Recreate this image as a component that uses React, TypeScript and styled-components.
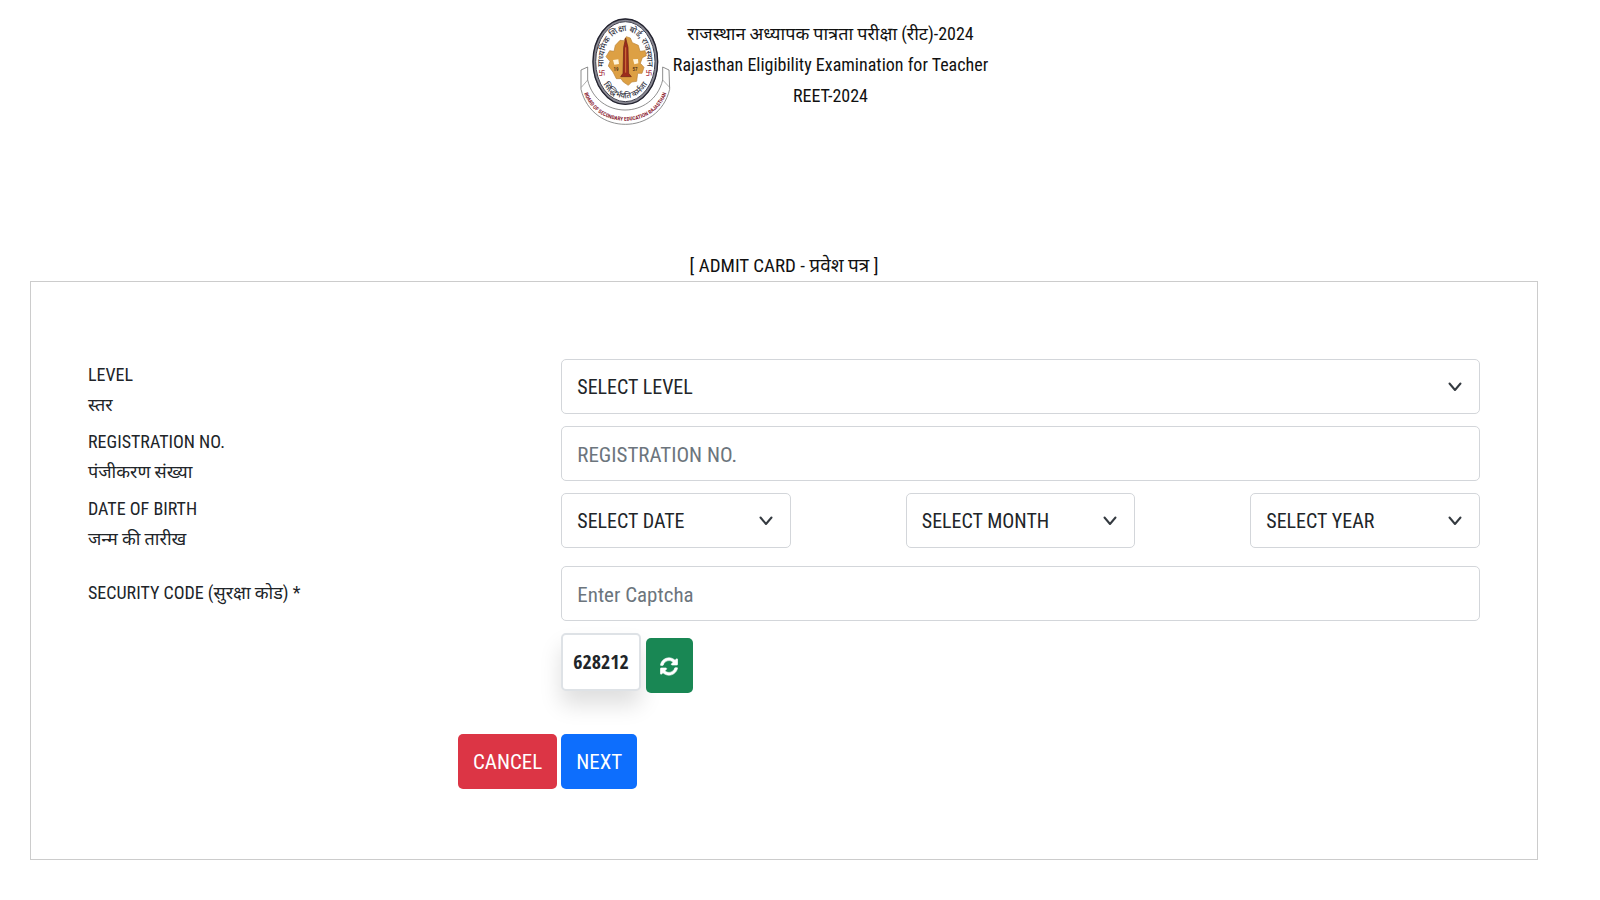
import React, { useState } from 'react';
import styled, { createGlobalStyle, css } from 'styled-components';
import { FaSyncAlt } from 'react-icons/fa';

const GlobalStyle = createGlobalStyle`
  *, *::before, *::after { box-sizing: border-box; }
  body {
    margin: 0;
    background: #fff;
    color: #212529;
    font-family: 'Roboto Condensed', 'Open Sans', 'Noto Sans', sans-serif;
    font-size: 18px;
    line-height: 31px;
  }
`;

const Page = styled.main`
  padding: 18px 62px 40px 30px;
`;

const Header = styled.header`
  display: flex;
  justify-content: center;
  align-items: flex-start;
  gap: 2px;
  margin-bottom: 126px;
  color: #111;
  text-align: center;
`;

const HeaderText = styled.div`
  display: flex;
  flex-direction: column;
`;

const ExamName = styled.h1`
  margin: 0;
  font-size: 18px;
  font-weight: 400;
`;

const HeaderLine = styled.p`
  margin: 0;
`;

const FormTitle = styled.h2`
  margin: 0;
  color: #111;
  font-size: 19px;
  font-weight: 400;
  line-height: 30px;
  text-align: center;
`;

const Panel = styled.form`
  padding: 77px 57px 70px;
  border: 1px solid #ccc;
`;

const Row = styled.div<{ $space?: number }>`
  display: grid;
  grid-template-columns: 34% 66%;
  align-items: start;
  padding-bottom: ${p => p.$space ?? 6}px;
`;

const Label = styled.label<{ $single?: boolean }>`
  display: flex;
  flex-direction: column;
  padding-top: ${p => (p.$single ? 12 : 1)}px;
  line-height: 30px;
`;

const control = css`
  width: 100%;
  height: 55px;
  padding: 2px 15px 0;
  border: 1px solid #d3d6da;
  border-radius: 5px;
  background: #fff;
  color: #212529;
  font: inherit;
`;

const TextInput = styled.input`
  ${control}
  font-size: 21px;
  &::placeholder { color: #6c757d; opacity: 1; }
`;

const SelectBox = styled.div`
  position: relative;
  width: 100%;
`;

const Select = styled.select`
  ${control}
  font-size: 20px;
  appearance: none;
`;

const Chevron = styled.svg`
  position: absolute;
  top: 23px;
  right: 18px;
  width: 14px;
  height: 10px;
  pointer-events: none;
`;

const DateGroup = styled.div`
  display: grid;
  grid-template-columns: repeat(3, 25%);
  justify-content: space-between;
`;

const CaptchaField = styled.div`
  display: flex;
  flex-direction: column;
  gap: 12px;
`;

const CaptchaLine = styled.div`
  display: flex;
  align-items: flex-start;
  gap: 5px;
`;

const CaptchaCode = styled.output`
  padding: 12px 10px;
  border: 2px solid #dee2e6;
  border-radius: 5px;
  background: #fff;
  box-shadow: 0 14px 22px rgba(0, 0, 0, 0.13);
  font-family: 'Open Sans Condensed', 'Roboto Condensed', sans-serif;
  font-size: 20px;
  font-weight: 700;
  line-height: 30px;
`;

const Button = styled.button<{ $color: string }>`
  height: 55px;
  padding: 2px 15px 0;
  border: 0;
  border-radius: 5px;
  background: ${p => p.$color};
  color: #fff;
  font: inherit;
  font-size: 21px;
`;

const RefreshButton = styled(Button)`
  display: grid;
  place-items: center;
  width: 47px;
  margin-top: 5px;
  padding: 2px 0 0;
`;

const RefreshIcon = styled(FaSyncAlt)`
  width: 18px;
  height: 21px;
  stroke: #fff;
  stroke-width: 16px;
`;

const Actions = styled(Row)`
  padding: 41px 0 0;
`;

const ActionCell = styled.div<{ $end?: boolean }>`
  display: flex;
  justify-content: ${p => (p.$end ? 'flex-end' : 'flex-start')};
  padding-right: 4px;
`;

const EmblemArt = styled.svg`
  flex: none;
  width: 91px;
  height: 107px;
`;

function Emblem() {
  return (
    <EmblemArt viewBox="27 24 273 321" role="img" aria-label="Board of Secondary Education Rajasthan">
      <defs>
        <path id="ringTop" d="M98 176 C88 26 238 26 228 176" />
        <path id="ringBottom" d="M89 200 C110 286 216 286 237 200" />
        <path id="ribbonLine" d="M38 243 C70 362 256 362 288 243" />
      </defs>
      <path d="M30 180 L50 171 L50 210 C78 330 246 330 275 210 L275 171 L294 180 L296 238 C262 378 64 378 30 238 Z" fill="#fff" stroke="#777" strokeWidth="2.5" />
      <path d="M31 232 L50 210 M296 232 L275 210" stroke="#888" strokeWidth="2" />
      <ellipse cx="163" cy="155" rx="94" ry="125" fill="#fff" stroke="#8a8a94" strokeWidth="9" />
      <ellipse cx="163" cy="155" rx="97" ry="128" fill="none" stroke="#23232f" strokeWidth="4" />
      <ellipse cx="163" cy="155" rx="89" ry="120" fill="none" stroke="#3d3d4a" strokeWidth="3" />
      <path d="M105 140 L116 122 L129 124 L133 106 L147 91 L158 92 L166 80 L178 84 L184 98 L202 106 L207 124 L222 122 L226 137 L214 143 L208 160 L219 172 L213 190 L200 190 L197 214 L182 216 L172 226 L157 216 L150 206 L136 206 L126 186 L112 168 L117 154 Z" fill="#dda044" stroke="#b98236" strokeWidth="2" />
      <path d="M126 150 L142 148 L144 162 L130 164 Z M186 148 L201 147 L202 160 L190 163 Z" fill="#fff3d8" />
      <path d="M156 190 L158 112 L164 84 L171 112 L173 190 L181 200 L149 200 Z" fill="#9c2c1c" stroke="#6d2417" strokeWidth="2" />
      <path d="M164 112 V188" stroke="#d27838" strokeWidth="3" />
      <text fill="#363644" fontSize="25" fontWeight="500">
        <textPath href="#ringTop" startOffset="50%" textAnchor="middle">माध्यमिक शिक्षा बोर्ड, राजस्थान</textPath>
      </text>
      <text fill="#363644" fontSize="24" fontWeight="500">
        <textPath href="#ringBottom" startOffset="50%" textAnchor="middle">सिद्धिर्भवति कर्मजा</textPath>
      </text>
      <text x="94" y="194" fill="#a52a3a" fontSize="18" fontWeight="700" textAnchor="middle">卐</text>
      <text x="235" y="194" fill="#a52a3a" fontSize="18" fontWeight="700" textAnchor="middle">卐</text>
      <text x="135" y="184" fill="#5b3a1c" fontSize="15" fontWeight="700" textAnchor="middle">19</text>
      <text x="192" y="184" fill="#5b3a1c" fontSize="15" fontWeight="700" textAnchor="middle">57</text>
      <text fill="#8b2432" fontSize="16" fontWeight="700">
        <textPath href="#ribbonLine" startOffset="50%" textAnchor="middle">BOARD OF SECONDARY EDUCATION RAJASTHAN</textPath>
      </text>
    </EmblemArt>
  );
}

interface DropDownProps {
  id?: string;
  name: string;
  prompt: string;
  options: string[];
  label?: string;
}

function DropDown({ id, name, prompt, options, label }: DropDownProps) {
  return (
    <SelectBox>
      <Select id={id} name={name} aria-label={label} defaultValue="">
        <option value="">{prompt}</option>
        {options.map(o => <option key={o}>{o}</option>)}
      </Select>
      <Chevron viewBox="0 0 14 10" aria-hidden="true">
        <path d="M1.5 1.5 L7 8 L12.5 1.5" fill="none" stroke="#343a40" strokeWidth="2" strokeLinecap="round" strokeLinejoin="round" />
      </Chevron>
    </SelectBox>
  );
}

const range = (from: number, to: number) =>
  Array.from({ length: to - from + 1 }, (_, i) => String(from + i));

export default function App() {
  const [code, setCode] = useState('628212');
  const refresh = () => setCode(String(Math.floor(100000 + Math.random() * 900000)));

  return (
    <>
      <GlobalStyle />
      <Page>
        <Header>
          <Emblem />
          <HeaderText>
            <ExamName lang="hi">राजस्थान अध्यापक पात्रता परीक्षा (रीट)-2024</ExamName>
            <HeaderLine>Rajasthan Eligibility Examination for Teacher</HeaderLine>
            <HeaderLine>REET-2024</HeaderLine>
          </HeaderText>
        </Header>
        <FormTitle>[ ADMIT CARD - प्रवेश पत्र ]</FormTitle>
        <Panel onSubmit={e => e.preventDefault()}>
          <Row>
            <Label htmlFor="level"><span>LEVEL</span><span lang="hi">स्तर</span></Label>
            <DropDown id="level" name="level" prompt="SELECT LEVEL" options={['LEVEL 1', 'LEVEL 2']} />
          </Row>
          <Row>
            <Label htmlFor="registration"><span>REGISTRATION NO.</span><span lang="hi">पंजीकरण संख्या</span></Label>
            <TextInput id="registration" name="registration" placeholder="REGISTRATION NO." />
          </Row>
          <Row $space={12}>
            <Label htmlFor="date"><span>DATE OF BIRTH</span><span lang="hi">जन्म की तारीख</span></Label>
            <DateGroup>
              <DropDown id="date" name="date" prompt="SELECT DATE" options={range(1, 31)} />
              <DropDown name="month" label="Month of birth" prompt="SELECT MONTH" options={range(1, 12)} />
              <DropDown name="year" label="Year of birth" prompt="SELECT YEAR" options={range(1960, 2008)} />
            </DateGroup>
          </Row>
          <Row $space={0}>
            <Label htmlFor="captcha" $single>SECURITY CODE (सुरक्षा कोड) *</Label>
            <CaptchaField>
              <TextInput id="captcha" name="captcha" placeholder="Enter Captcha" />
              <CaptchaLine>
                <CaptchaCode>{code}</CaptchaCode>
                <RefreshButton type="button" $color="#198754" aria-label="Refresh code" onClick={refresh}>
                  <RefreshIcon />
                </RefreshButton>
              </CaptchaLine>
            </CaptchaField>
          </Row>
          <Actions>
            <ActionCell $end><Button type="reset" $color="#dc3545">CANCEL</Button></ActionCell>
            <ActionCell><Button type="submit" $color="#0d6efd">NEXT</Button></ActionCell>
          </Actions>
        </Panel>
      </Page>
    </>
  );
}
